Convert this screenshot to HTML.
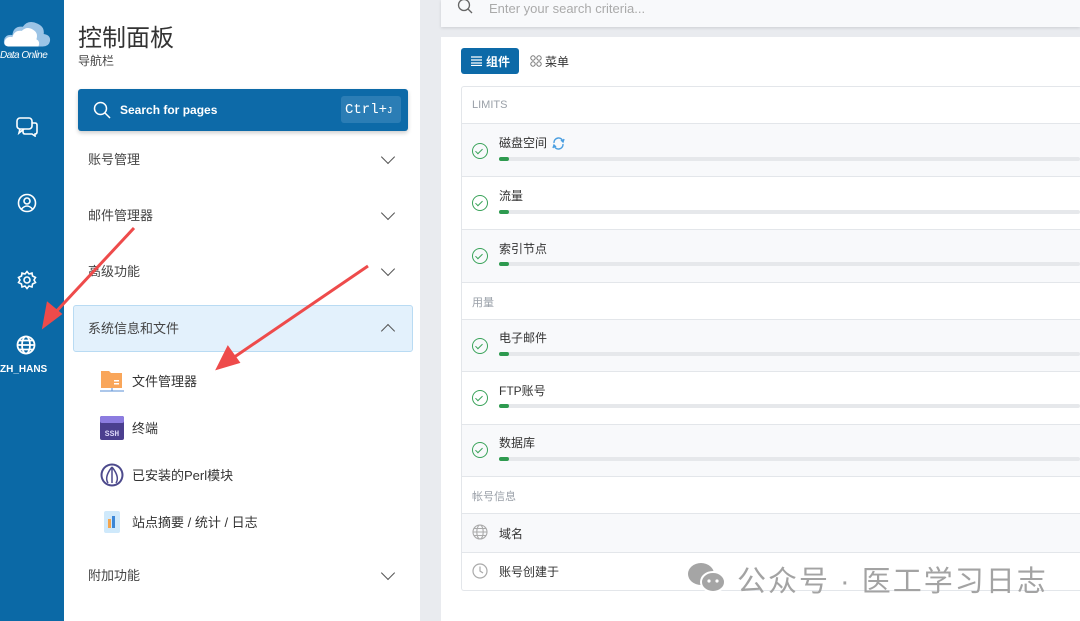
<!DOCTYPE html>
<html><head><meta charset="utf-8"><style>
*{box-sizing:border-box;margin:0;padding:0}
body{width:1080px;height:621px;overflow:hidden;background:#e9ebef;font-family:"Liberation Sans","Noto Sans CJK SC",sans-serif;position:relative;color:#333}
.side{position:absolute;left:0;top:0;width:64px;height:621px;background:#0b69a6}
.nav{position:absolute;left:64px;top:0;width:356px;height:621px;background:#fff}
.abs{position:absolute}
.item{position:absolute;left:88px;font-size:13px;color:#444}
.chev{position:absolute;left:383px;width:10px;height:10px;border-right:1.5px solid #555;border-bottom:1.5px solid #555;transform:rotate(45deg)}
.sub{position:absolute;left:132px;font-size:13px;color:#333}
.row{position:absolute;left:462px;width:618px;border-top:1px solid #e3e6ea}
.lbl{position:absolute;left:499px;font-size:12px;color:#333}
.bar{position:absolute;left:499px;width:581px;height:4px;border-radius:2px;background:#e6e8eb}
.bar i{position:absolute;left:0;top:0;width:10px;height:4px;border-radius:2px;background:#2e9a4f}
.ok{position:absolute;left:472px;width:16px;height:16px;border:1.5px solid #3aa35a;border-radius:50%}
.ok:after{content:"";position:absolute;left:4px;top:2.5px;width:3px;height:6px;border-right:1.5px solid #3aa35a;border-bottom:1.5px solid #3aa35a;transform:rotate(45deg)}
.hd{position:absolute;left:472px;font-size:11px;color:#9aa0a8}
</style></head><body>
<div class="side">
 <svg class="abs" style="left:3px;top:18px" width="48" height="32" viewBox="0 0 46 28"><path d="M6 26 Q0 26 1 20 Q2 14 9 15 Q10 6 19 7 Q24 0 33 4 Q40 7 39 14 Q46 15 45 21 Q44 26 38 26Z" fill="#9cc4e6"/><path d="M5 26 Q0 25 2 20 Q4 16 9 17 Q11 10 18 11 Q23 6 29 10 Q34 13 32 19 Q36 21 34 26Z" fill="#fff"/></svg>
 <div class="abs" style="left:0;top:50px;width:64px;font-size:10px;color:#fff;font-style:italic;letter-spacing:-0.5px">Data Online</div>
 <svg class="abs" style="left:16px;top:117px" width="22" height="20" viewBox="0 0 22 20" fill="none" stroke="#fff" stroke-width="1.6"><rect x="1" y="1" width="15" height="11" rx="3"/><path d="M4 12 L3 16 L8 12"/><path d="M7 12 V15 Q7 17 9 17 H16 L19 19 V17 Q21 17 21 15 V8 Q21 6 19 6 H16"/></svg>
 <svg class="abs" style="left:17px;top:193px" width="20" height="20" viewBox="0 0 20 20" fill="none" stroke="#fff" stroke-width="1.6"><circle cx="10" cy="10" r="8.5"/><circle cx="10" cy="8" r="3"/><path d="M4.5 16 Q10 10 15.5 16"/></svg>
 <svg class="abs" style="left:17px;top:270px" width="20" height="20" viewBox="0 0 20 20" fill="none" stroke="#fff" stroke-width="1.6"><circle cx="10" cy="10" r="3"/><path d="M10 1.5 L12 4 L15 3 L15.5 6 L18.5 7.5 L17 10 L18.5 12.5 L15.5 14 L15 17 L12 16 L10 18.5 L8 16 L5 17 L4.5 14 L1.5 12.5 L3 10 L1.5 7.5 L4.5 6 L5 3 L8 4Z"/></svg>
 <svg class="abs" style="left:16px;top:335px" width="20" height="20" viewBox="0 0 20 20" fill="none" stroke="#fff" stroke-width="1.8"><circle cx="10" cy="10" r="8.5"/><ellipse cx="10" cy="10" rx="4" ry="8.5"/><path d="M1.5 10H18.5M3 5.5H17M3 14.5H17"/></svg>
 <div class="abs" style="left:0;top:364px;font-size:10px;font-weight:bold;color:#fff">ZH_HANS</div>
</div>
<div class="nav"></div>
<div class="abs" style="left:78px;top:18px;font-size:24px;color:#333">控制面板</div>
<div class="abs" style="left:78px;top:52px;font-size:12px;color:#444">导航栏</div>
<div class="abs" style="left:78px;top:89px;width:330px;height:42px;background:#0d6aa8;border-radius:3px;box-shadow:0 2px 4px rgba(0,0,0,.2)">
 <svg class="abs" style="left:15px;top:12px" width="18" height="18" viewBox="0 0 18 18" fill="none" stroke="#fff" stroke-width="1.5"><circle cx="7.5" cy="7.5" r="6"/><path d="M12 12L17 17"/></svg>
 <div class="abs" style="left:42px;top:14px;font-size:12px;font-weight:bold;color:#fff">Search for pages</div>
 <div class="abs" style="left:263px;top:7px;width:60px;height:27px;background:#2b7db5;border-radius:3px;color:#fff;font-family:'Liberation Mono',monospace;font-size:14px;padding:6px 0 0 4px">Ctrl+<span style="font-size:9px">J</span></div>
</div>
<div class="item" style="top:149px">账号管理</div><div class="chev" style="top:152px"></div>
<div class="item" style="top:205px">邮件管理器</div><div class="chev" style="top:208px"></div>
<div class="item" style="top:261px">高级功能</div><div class="chev" style="top:264px"></div>
<div class="abs" style="left:73px;top:305px;width:340px;height:47px;background:#e3f1fc;border:1px solid #b9dbf3;border-radius:3px"></div>
<div class="item" style="top:318px">系统信息和文件</div><div class="chev" style="top:326px;transform:rotate(-135deg)"></div>
<svg class="abs" style="left:100px;top:369px" width="24" height="24" viewBox="0 0 24 24"><path d="M1 2H9L11 4H22V19H1Z" fill="#f9a65a"/><rect x="14" y="11" width="5" height="1.5" fill="#fff"/><rect x="14" y="14" width="5" height="1.5" fill="#fff"/><path d="M0 22H24M12 19V22" stroke="#5a8fd6" stroke-width="1"/></svg>
<div class="sub" style="top:371px">文件管理器</div>
<svg class="abs" style="left:100px;top:416px" width="24" height="24" viewBox="0 0 24 24"><rect x="0" y="0" width="24" height="24" rx="2" fill="#4b3f8f"/><rect x="0" y="0" width="24" height="7" rx="2" fill="#8c7ce0"/><text x="12" y="20" font-size="8" font-weight="bold" fill="#d8d3f5" text-anchor="middle" font-family="Liberation Mono">SSH</text></svg>
<div class="sub" style="top:418px">终端</div>
<svg class="abs" style="left:100px;top:463px" width="24" height="24" viewBox="0 0 24 24"><circle cx="12" cy="12" r="11.5" fill="#4d4a8c"/><circle cx="12" cy="12" r="9.5" fill="#fff"/><path d="M12 4 Q4 14 8 20 M12 4 Q20 14 16 20 M12 4 V20" stroke="#4d4a8c" stroke-width="1.5" fill="none"/></svg>
<div class="sub" style="top:465px">已安装的Perl模块</div>
<svg class="abs" style="left:100px;top:510px" width="24" height="24" viewBox="0 0 24 24"><rect x="4" y="1" width="16" height="22" rx="2" fill="#cfe9fb"/><rect x="8" y="9" width="3" height="9" fill="#f4a54e"/><rect x="12" y="6" width="3" height="12" fill="#3b86d6"/></svg>
<div class="sub" style="top:512px">站点摘要 / 统计 / 日志</div>
<div class="item" style="top:565px">附加功能</div><div class="chev" style="top:568px"></div>
<svg class="abs" style="left:0;top:0" width="420" height="621"><g stroke="#ee4b4b" stroke-width="3" fill="#ee4b4b"><line x1="134" y1="228" x2="52" y2="316"/><path d="M44 326 L48 304 L60 314Z"/><line x1="368" y1="266" x2="230" y2="360"/><path d="M218 368 L228 348 L238 362Z"/></g></svg>

<div class="abs" style="left:441px;top:0;width:639px;height:27px;background:#f8f9fb;box-shadow:0 1px 3px rgba(0,0,0,.12)">
 <svg class="abs" style="left:16px;top:-2px" width="16" height="16" viewBox="0 0 16 16" fill="none" stroke="#666" stroke-width="1.3"><circle cx="7" cy="7" r="5.5"/><path d="M11 11L15 15"/></svg>
 <div class="abs" style="left:48px;top:1px;font-size:13px;color:#aaa">Enter your search criteria...</div>
</div>
<div class="abs" style="left:441px;top:37px;width:639px;height:584px;background:#fff"></div>
<div class="abs" style="left:461px;top:48px;width:58px;height:26px;background:#0d6aa8;border-radius:3px;color:#fff;font-size:12px;font-weight:bold;padding:5px 0 0 25px">组件</div>
<svg class="abs" style="left:471px;top:56px" width="11" height="10"><path d="M0 1H11M0 4H11M0 7H11M0 9.5H11" stroke="#fff" stroke-width="1.2"/></svg>
<svg class="abs" style="left:530px;top:55px" width="12" height="12" fill="none" stroke="#777" stroke-width="1"><circle cx="3" cy="3" r="2.2"/><circle cx="9" cy="3" r="2.2"/><circle cx="3" cy="9" r="2.2"/><circle cx="9" cy="9" r="2.2"/></svg>
<div class="abs" style="left:545px;top:53px;font-size:12px;color:#333">菜单</div>

<div class="row" style="top:123px;height:54px;background:#f8f9fb"></div>
<div class="row" style="top:176px;height:53px"></div>
<div class="row" style="top:229px;height:53px;background:#f8f9fb"></div>
<div class="row" style="top:282px;height:37px"></div>
<div class="row" style="top:319px;height:53px;background:#f8f9fb"></div>
<div class="row" style="top:371px;height:53px"></div>
<div class="row" style="top:424px;height:53px;background:#f8f9fb"></div>
<div class="row" style="top:476px;height:38px"></div>
<div class="row" style="top:513px;height:39px;background:#f8f9fb"></div>
<div class="row" style="top:552px;height:38px"></div>
<div class="abs" style="left:461px;top:86px;width:619px;height:505px;border:1px solid #e3e6ea;border-right:none;border-radius:3px 0 0 3px"></div>
<div class="hd" style="top:99px">LIMITS</div>
<div class="ok" style="top:143px"></div><div class="lbl" style="top:134px">磁盘空间</div>
<svg class="abs" style="left:552px;top:137px" width="13" height="13" fill="none" stroke="#4a9ee0" stroke-width="1.4"><path d="M2 6A4.5 4.5 0 0 1 11 5M11 7A4.5 4.5 0 0 1 2 8M9 3L11 5L12 2M4 10L2 8L1 11"/></svg>
<div class="bar" style="top:157px"><i></i></div>
<div class="ok" style="top:195px"></div><div class="lbl" style="top:187px">流量</div><div class="bar" style="top:210px"><i></i></div>
<div class="ok" style="top:248px"></div><div class="lbl" style="top:240px">索引节点</div><div class="bar" style="top:262px"><i></i></div>
<div class="hd" style="top:294px">用量</div>
<div class="ok" style="top:338px"></div><div class="lbl" style="top:329px">电子邮件</div><div class="bar" style="top:352px"><i></i></div>
<div class="ok" style="top:390px"></div><div class="lbl" style="top:382px">FTP账号</div><div class="bar" style="top:404px"><i></i></div>
<div class="ok" style="top:442px"></div><div class="lbl" style="top:434px">数据库</div><div class="bar" style="top:457px"><i></i></div>
<div class="hd" style="top:488px">帐号信息</div>
<svg class="abs" style="left:472px;top:524px" width="16" height="16" fill="none" stroke="#aaa" stroke-width="1.1"><circle cx="8" cy="8" r="7"/><ellipse cx="8" cy="8" rx="3.2" ry="7"/><path d="M1 8H15M2 4.5H14M2 11.5H14"/></svg>
<div class="lbl" style="top:525px">域名</div>
<svg class="abs" style="left:472px;top:563px" width="16" height="16" fill="none" stroke="#aaa" stroke-width="1.2"><circle cx="8" cy="8" r="7"/><path d="M8 3.5V8L11 10"/></svg>
<div class="lbl" style="top:563px">账号创建于</div>

<svg class="abs" style="left:686px;top:561px" width="42" height="34"><ellipse cx="15" cy="13" rx="13" ry="11" fill="#a5a5a5"/><ellipse cx="27" cy="21" rx="12" ry="10" fill="#a5a5a5" stroke="#fff" stroke-width="2"/><circle cx="23" cy="20" r="1.6" fill="#fff"/><circle cx="31" cy="20" r="1.6" fill="#fff"/></svg>
<div class="abs" style="left:737px;top:558px;font-size:29px;color:#a3a3a3;letter-spacing:2px;white-space:nowrap">公众号 · 医工学习日志</div>
</body></html>
